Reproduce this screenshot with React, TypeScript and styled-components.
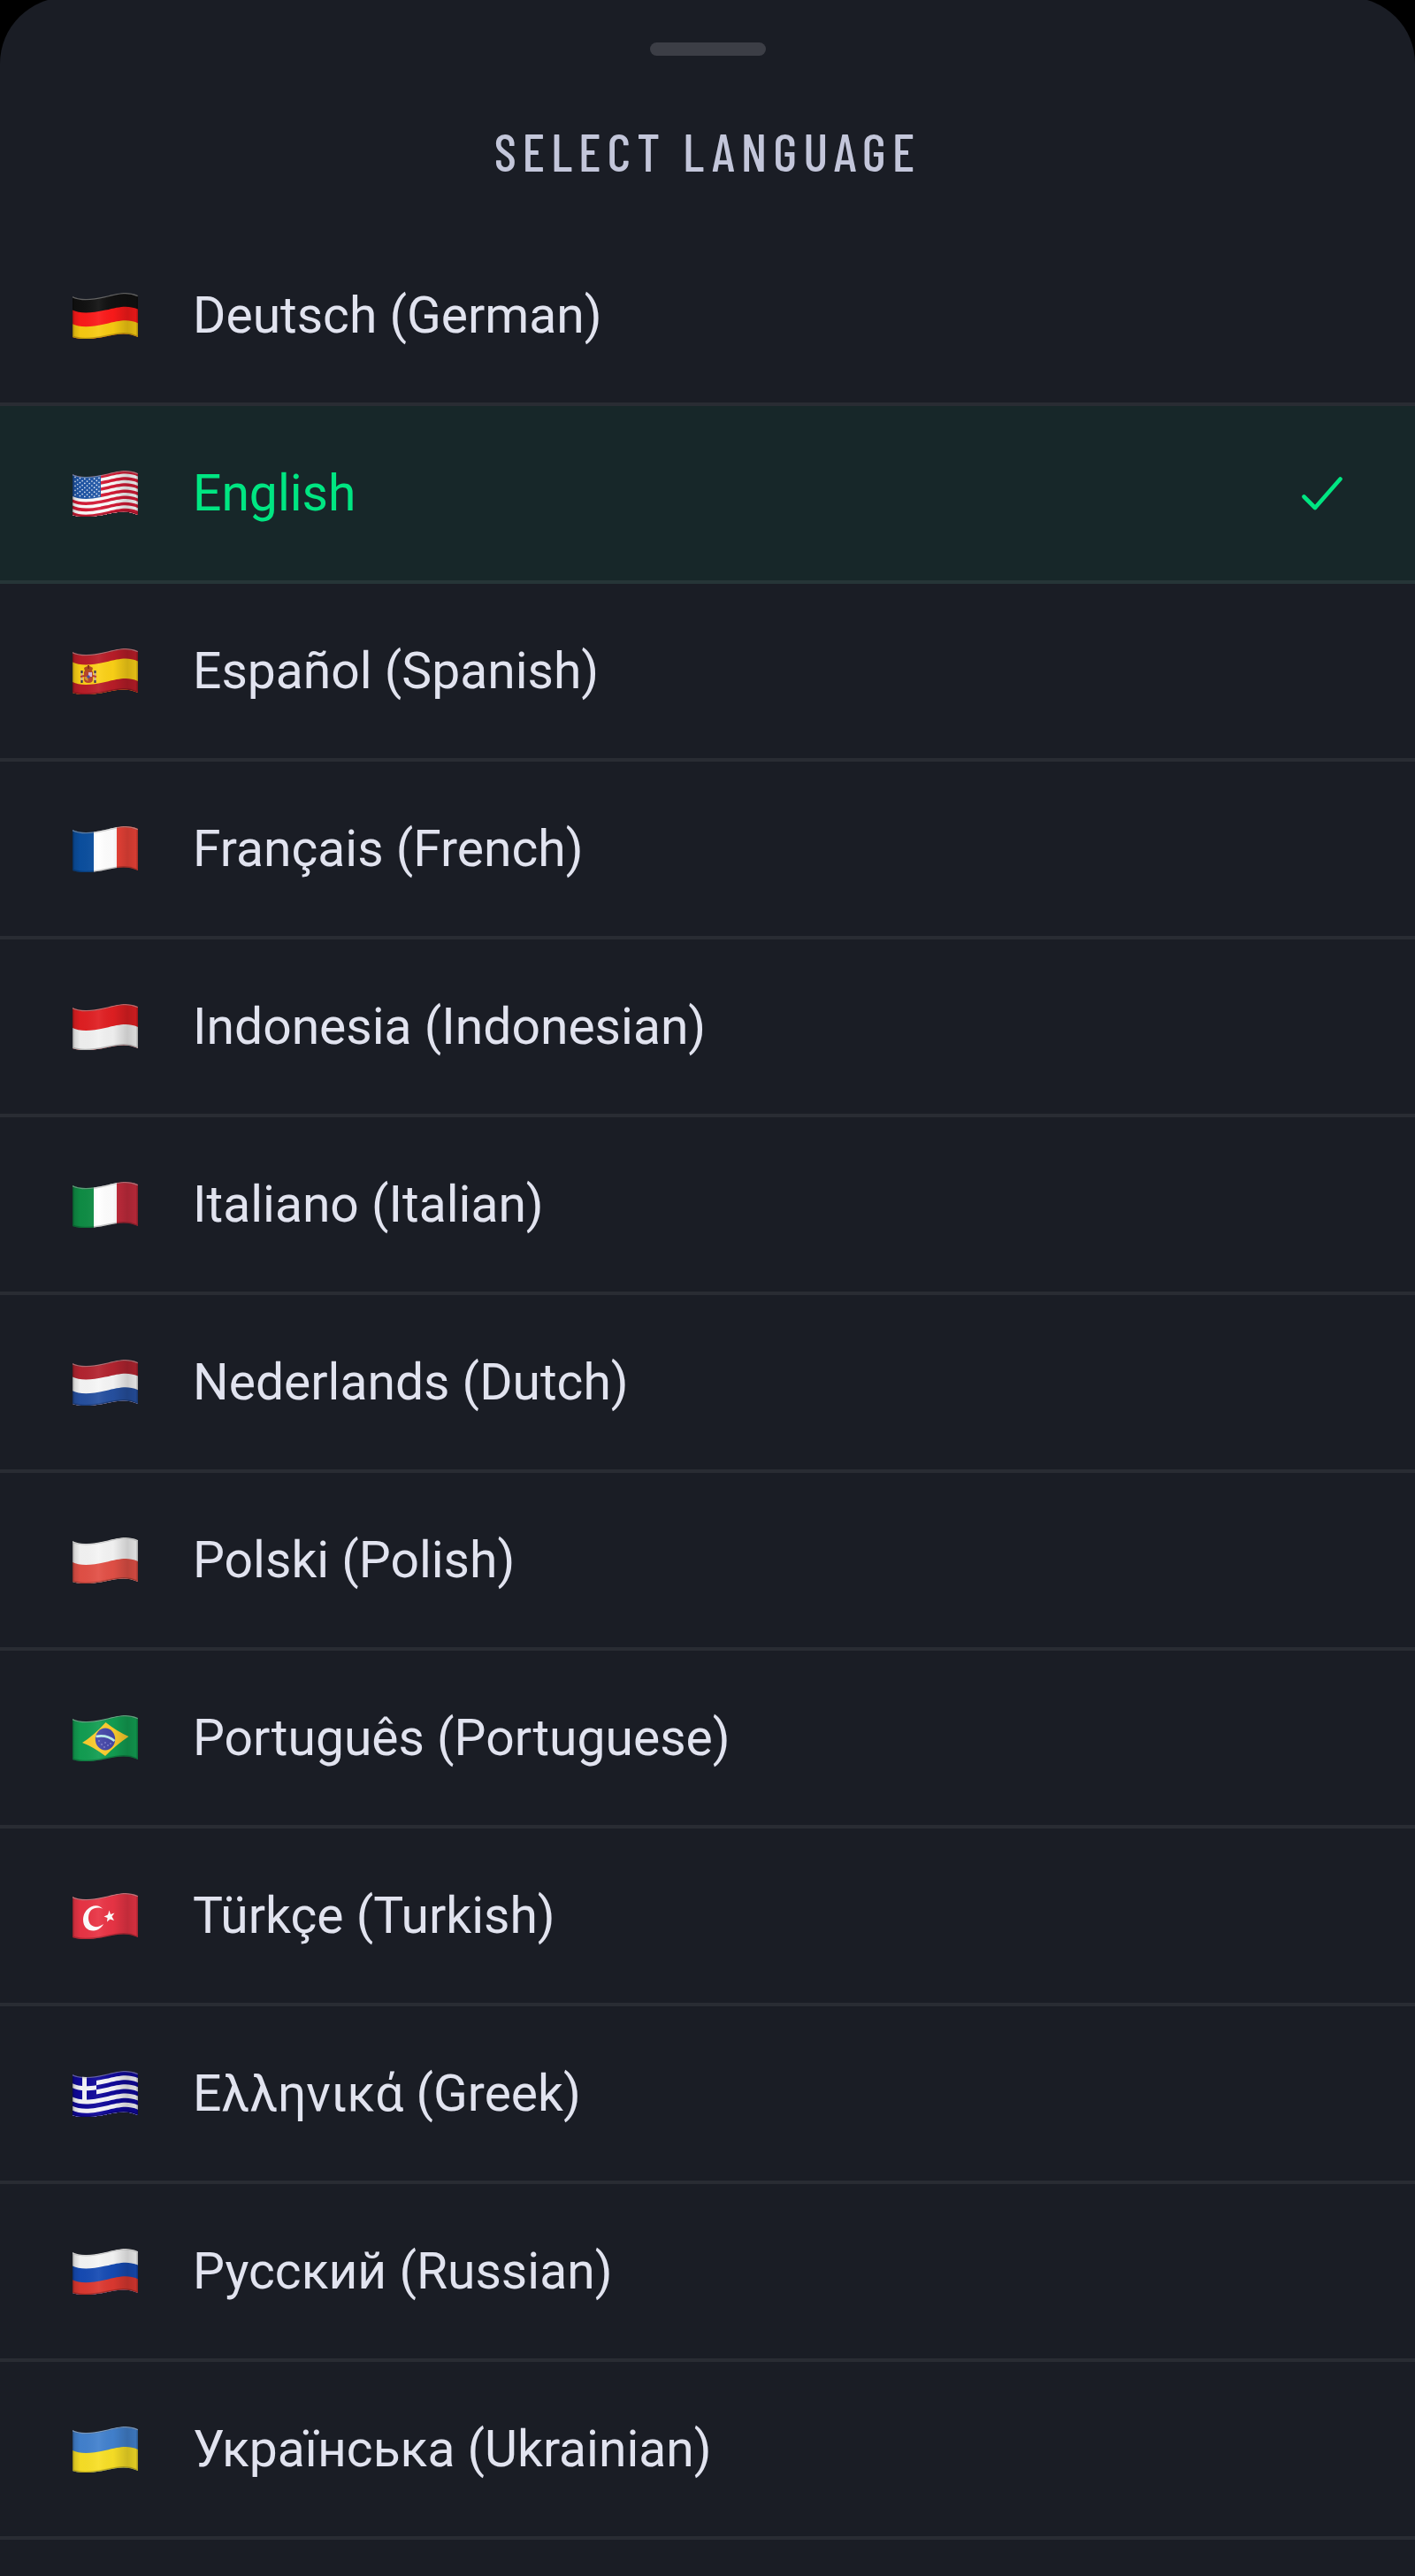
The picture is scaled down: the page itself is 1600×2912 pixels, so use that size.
import React, { useId, useState } from "react";
import styled, { createGlobalStyle } from "styled-components";

const GlobalStyle = createGlobalStyle`
  * { box-sizing: border-box; }
  body { margin: 0; background: #000; }
`;

const Sheet = styled.main`
  min-height: calc(100vh + 3px);
  margin-top: -3px;
  background: #1a1d25;
  border-radius: 75px 75px 0 0;
  font-family: Roboto, "Open Sans", sans-serif;
`;

const Header = styled.header`
  display: flex;
  flex-direction: column;
  align-items: center;
  height: 261px;
  padding-top: 51px;
`;

const Handle = styled.div`
  width: 131px;
  height: 15px;
  border-radius: 8px;
  background: #3c3e46;
`;

const Title = styled.h1`
  margin: 72px 0 0;
  color: #c3c6da;
  font-family: "Barlow Condensed", "Roboto Condensed", "Liberation Sans Narrow", Roboto, sans-serif;
  font-size: 59px;
  font-weight: 500;
  line-height: 72px;
  letter-spacing: 7px;
  text-transform: uppercase;
`;

const List = styled.ul`
  margin: 0;
  padding: 0;
  list-style: none;
`;

const Option = styled.button<{ $selected: boolean }>`
  display: flex;
  align-items: center;
  gap: 62px;
  width: 100%;
  height: 201px;
  padding: 0 82px;
  border: 0;
  border-bottom: 4px solid rgba(255, 255, 255, 0.065);
  background: ${(p) => (p.$selected ? "#172729" : "transparent")};
  color: ${(p) => (p.$selected ? "#00e682" : "#e1e3ef")};
  font: inherit;
  font-size: 57px;
  line-height: 72px;
  text-align: left;
  cursor: pointer;
`;

const Label = styled.span`
  flex: 1;
`;

const FlagSvg = styled.svg`
  flex: none;
  width: 74px;
  height: 52px;
`;

const Check = styled.svg`
  flex: none;
  width: 46px;
  height: 38px;
  fill: none;
  stroke: currentColor;
  stroke-width: 4.6;
  stroke-linecap: round;
  stroke-linejoin: round;
`;

// Everything below the waving line that starts at height y.
const below = (y: number) =>
  `M0 ${y + 4}C8 ${y + 8} 20 ${y + 8} 37 ${y + 4}S62 ${y - 2} 74 ${y + 3}V60H0Z`;

const CLOTH =
  "M0 4C8 8 20 8 37 4S62-2 74 3V50C62 45 54 46 37 49.5S8 53 0 50Z";

const Bands = ({ colors, from = 0, size }: { colors: string[]; from?: number; size: number }) => (
  <>
    {colors.map((c, i) => (
      <path key={i} d={below(from + i * size)} fill={c} />
    ))}
  </>
);

const Columns = ({ colors }: { colors: [string, string, string] }) => (
  <>
    <rect width="24" height="52" fill={colors[0]} />
    <rect x="24" width="26" height="52" fill={colors[1]} />
    <rect x="50" width="24" height="52" fill={colors[2]} />
  </>
);

const alternate = (a: string, b: string, n: number) =>
  Array.from({ length: n }, (_, i) => (i % 2 ? b : a));

const RED = "#d41b36";
const NAVY = "#10089a";

const Stars = () => (
  <g fill="#dfe8f8">
    {Array.from({ length: 9 }, (_, r) =>
      Array.from({ length: r % 2 ? 5 : 6 }, (_, c) => {
        const x = 3 + c * 5.4 + (r % 2 ? 2.7 : 0);
        const y = 6.6 + r * 2.5 + 3 * Math.sin((Math.PI * x) / 37);
        return <circle key={`${r}-${c}`} cx={x} cy={y} r="0.85" />;
      })
    )}
  </g>
);

const flags: Record<string, React.ReactNode> = {
  de: <Bands colors={["#111111", "#fb1a1a", "#f7cb12"]} size={15.6} />,
  us: (
    <>
      <Bands colors={alternate(RED, "#fbfbfb", 13)} size={3.56} />
      <svg width="32" height="60">
        <path d={below(0)} fill="#1f55a5" />
        <Stars />
        <Bands colors={alternate("#fbfbfb", RED, 6)} from={24.9} size={3.56} />
      </svg>
    </>
  ),
  es: (
    <>
      <path d={below(0)} fill="#b91d28" />
      <path d={below(11.5)} fill="#fbd117" />
      <path d={below(34)} fill="#b91d28" />
      <path d="M13 22q5-4 10 0l-1 4h-8z" fill="#b24a1c" />
      <rect x="17" y="19" width="2" height="4" fill="#8c3317" />
      <path d="M13 26h10v9q0 4-5 4t-5-4z" fill="#b8432a" />
      <path d="M18 27h4v5h-4z" fill="#d9b8cf" />
      <path d="M13.500 32h4v5q-3-1-4-3z" fill="#d7952d" />
      <circle cx="18" cy="32" r="1.800" fill="#4b4a9b" />
      <path d="M10.500 25v13M25.500 25v13" stroke="#c9a5a5" strokeWidth="2" />
      <path d="M10.500 25v3M10.500 36v3M25.500 25v3M25.500 36v3" stroke="#3b3546" strokeWidth="2.200" />
      <path d="M9 32l4-1M27 32l-4-1" stroke="#b5382b" strokeWidth="2" />
    </>
  ),
  fr: <Columns colors={["#0b4f9f", "#ffffff", "#ee4338"]} />,
  id: <Bands colors={["#e01f22", "#f1f1f1"]} size={23} />,
  it: <Columns colors={["#0f8d45", "#ffffff", "#c62c3d"]} />,
  nl: <Bands colors={["#b32430", "#f6f6f6", "#2650a0"]} size={15.6} />,
  pl: <Bands colors={["#f4f4f4", "#e25046"]} size={24} />,
  br: (
    <>
      <path d={below(0)} fill="#129e52" />
      <path d="M11 31Q24 23 37.500 8Q50 18 63.500 24Q50 33 37 46Q24 36 11 31Z" fill="#fccc2d" />
      <ellipse cx="37" cy="27" rx="11.200" ry="12.500" fill="#4547a8" />
      <path d="M26.500 24q12-2.500 21 5" fill="none" stroke="#b9ecec" strokeWidth="2.600" />
      <g fill="#b6b8ee">
        <circle cx="30" cy="29" r=".7" />
        <circle cx="33" cy="33" r=".7" />
        <circle cx="37" cy="31" r=".7" />
        <circle cx="36" cy="36" r=".7" />
        <circle cx="40" cy="34" r=".7" />
        <circle cx="43" cy="32" r=".7" />
      </g>
    </>
  ),
  tr: (
    <>
      <path d={below(0)} fill="#e93445" />
      <path
        d="M34.500 18C31 14 26 13 21 15.500C15 18.500 12 24 12 30C12 38 17 43 24 42.500C29 42 33 39 35 35C31 38 27 39 23.500 37.500C19.500 36 18 32 18 28C18 23 20 19 24 17.500C28 16 31 16 34.500 18Z"
        fill="#fff"
      />
      <path
        d="M41.500 19.500L43 24L47.500 22.500L44.500 26.500L47 31L42.500 29.500L39 32.500L39.500 28L35.500 26.500L40 24.500Z"
        fill="#fff"
      />
    </>
  ),
  gr: (
    <>
      <Bands colors={alternate(NAVY, "#f4f4f8", 9)} size={5.1} />
      <svg width="27" height="60">
        <path d={below(0)} fill={NAVY} />
        <Bands colors={["#f4f4f8", NAVY]} from={10.2} size={5.1} />
        <rect x="11" width="5" height="60" fill="#f4f4f8" />
        <Bands colors={[NAVY]} from={40.8} size={5.1} />
        <Bands colors={["#f4f4f8", NAVY, "#f4f4f8", NAVY]} from={25.5} size={5.1} />
      </svg>
    </>
  ),
  ru: <Bands colors={["#f5f5f5", "#164bb4", "#dc3830"]} size={15.6} />,
  ua: <Bands colors={["#4281ce", "#f8df26"]} size={23} />,
};

const Flag = ({ code }: { code: string }) => {
  const id = useId();
  return (
    <FlagSvg viewBox="0 0 74 52" aria-hidden="true">
      <defs>
        <clipPath id={`${id}c`}>
          <path d={CLOTH} />
        </clipPath>
        <linearGradient id={`${id}s`}>
          <stop offset="0" stopColor="#000" stopOpacity=".16" />
          <stop offset=".12" stopColor="#000" stopOpacity=".02" />
          <stop offset=".4" stopColor="#fff" stopOpacity=".06" />
          <stop offset=".62" stopColor="#000" stopOpacity=".02" />
          <stop offset=".84" stopColor="#000" stopOpacity=".17" />
          <stop offset="1" stopColor="#000" stopOpacity=".08" />
        </linearGradient>
      </defs>
      <g clipPath={`url(#${id}c)`}>
        {flags[code]}
        <path d={CLOTH} fill={`url(#${id}s)`} />
        <path d={CLOTH} fill="none" stroke="#000" strokeOpacity=".22" strokeWidth="3" />
        <path d="M0 4C8 8 20 8 37 4S62-2 74 3" fill="none" stroke="#fff" strokeOpacity=".34" strokeWidth="2.500" />
      </g>
    </FlagSvg>
  );
};

const languages = [
  { code: "de", name: "Deutsch (German)" },
  { code: "us", name: "English" },
  { code: "es", name: "Español (Spanish)" },
  { code: "fr", name: "Français (French)" },
  { code: "id", name: "Indonesia (Indonesian)" },
  { code: "it", name: "Italiano (Italian)" },
  { code: "nl", name: "Nederlands (Dutch)" },
  { code: "pl", name: "Polski (Polish)" },
  { code: "br", name: "Português (Portuguese)" },
  { code: "tr", name: "Türkçe (Turkish)" },
  { code: "gr", name: "Ελληνικά (Greek)" },
  { code: "ru", name: "Русский (Russian)" },
  { code: "ua", name: "Українська (Ukrainian)" },
];

export default function App() {
  const [selected, setSelected] = useState("us");
  return (
    <>
      <GlobalStyle />
      <Sheet>
        <Header>
          <Handle />
          <Title>Select language</Title>
        </Header>
        <List>
          {languages.map(({ code, name }) => (
            <li key={code}>
              <Option
                type="button"
                $selected={code === selected}
                aria-pressed={code === selected}
                onClick={() => setSelected(code)}
              >
                <Flag code={code} />
                <Label>{name}</Label>
                {code === selected && (
                  <Check viewBox="0 0 46 38" aria-hidden="true">
                    <path d="M2.500 22.500L15 35L43.500 2.500" />
                  </Check>
                )}
              </Option>
            </li>
          ))}
        </List>
      </Sheet>
    </>
  );
}
